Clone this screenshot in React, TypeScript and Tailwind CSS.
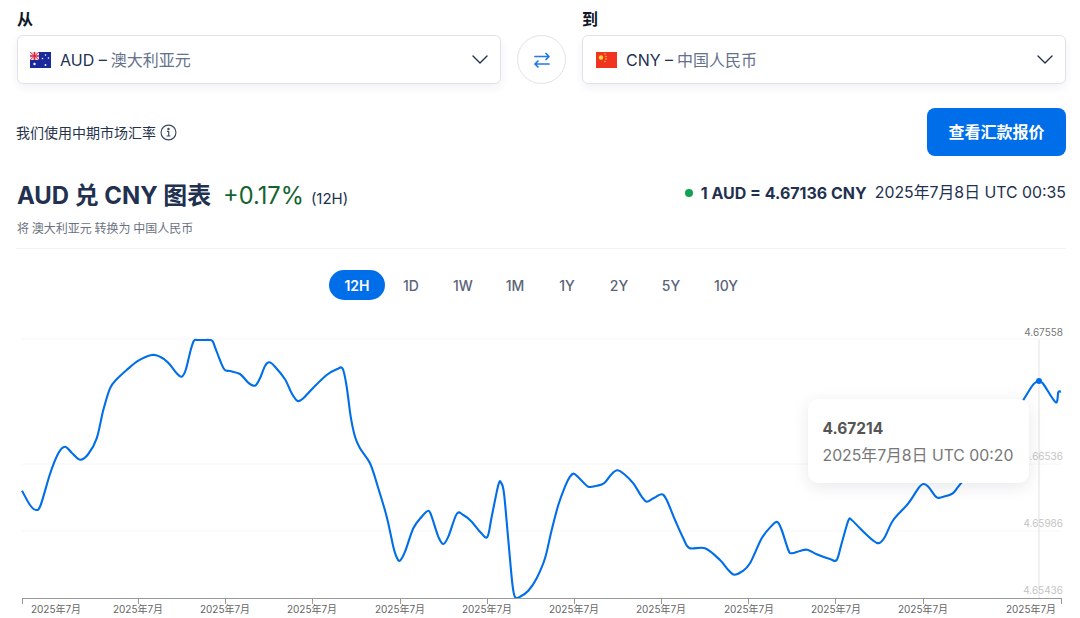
const font = { fontFamily: 'Inter, "Noto Sans CJK SC", sans-serif' }

// traced from the chart, [x, y] in page pixels minus the chart's top (320)
const raw: number[][] = [
  [66,512],[90,555],[108,570],[122,555],[150,462],[175,400],[195,380],[215,398],[240,419],[265,402],[290,355],[310,270],[330,205],[350,178],[380,150],[415,122],[455,105],[480,110],[505,128],[530,160],[545,170],[557,150],[572,90],[582,62],[592,60],[610,60],[628,60],[638,64],[650,95],[672,147],[690,153],[720,162],[745,188],[765,197],[780,175],[795,138],[808,127],[825,140],[855,178],[875,220],[893,243],[910,235],[940,203],[980,165],[1010,148],[1028,146],[1040,200],[1052,290],[1065,350],[1080,385],[1110,430],[1135,505],[1160,590],[1180,680],[1190,712],
  [1200,722],[1215,695],[1240,625],[1265,590],[1285,572],[1295,590],[1315,650],[1330,672],[1345,650],[1370,582],[1390,585],[1415,605],[1440,635],[1462,651],[1475,590],[1495,495],[1503,488],[1512,520],[1525,660],[1537,790],[1545,831],[1560,830],[1585,812],[1610,775],[1635,715],[1655,630],[1675,555],[1695,500],[1710,470],[1722,461],[1740,477],[1765,500],[1790,497],[1812,490],[1835,462],[1852,451],[1872,462],[1900,490],[1925,530],[1940,545],[1960,535],[1985,523],[2000,540],[2025,600],[2050,655],[2068,684],[2115,685],[2160,720],[2185,750],[2202,764],[2225,755],[2250,730],[2285,655],[2315,617],[2332,606],[2345,630],[2365,690],[2375,700],
  [2400,693],[2422,689],[2450,703],[2490,717],[2510,720],[2525,670],[2545,602],[2555,600],[2580,625],[2620,662],[2638,669],[2655,650],[2680,600],[2725,550],[2755,505],[2770,492],[2785,500],[2810,532],[2830,530],[2858,520],[2885,487],[2990,360],[3070,240],[3100,193],[3118,184],[3130,192],[3167,247],[3175,217],[3183,215],
]
const points = raw.map(([x, y]) => [x / 3, y / 3])

function smoothPath(pts: number[][]) {
  let d = `M${pts[0][0].toFixed(1)} ${pts[0][1].toFixed(1)}`
  for (let i = 0; i < pts.length - 1; i++) {
    const p0 = pts[Math.max(i - 1, 0)]
    const p1 = pts[i]
    const p2 = pts[i + 1]
    const p3 = pts[Math.min(i + 2, pts.length - 1)]
    const c1x = p1[0] + (p2[0] - p0[0]) / 6
    const c1y = p1[1] + (p2[1] - p0[1]) / 6
    const c2x = p2[0] - (p3[0] - p1[0]) / 6
    const c2y = p2[1] - (p3[1] - p1[1]) / 6
    d += `C${c1x.toFixed(1)} ${c1y.toFixed(1)} ${c2x.toFixed(1)} ${c2y.toFixed(1)} ${p2[0].toFixed(1)} ${p2[1].toFixed(1)}`
  }
  return d
}

const ranges = [
  { label: '12H', width: 'w-[56px] rounded-full bg-[#006ee9] font-semibold text-white' },
  { label: '1D', width: 'w-[52px] font-medium text-[#5b6579]' },
  { label: '1W', width: 'w-[52px] font-medium text-[#5b6579]' },
  { label: '1M', width: 'w-[52px] font-medium text-[#5b6579]' },
  { label: '1Y', width: 'w-[52px] font-medium text-[#5b6579]' },
  { label: '2Y', width: 'w-[52px] font-medium text-[#5b6579]' },
  { label: '5Y', width: 'w-[52px] font-medium text-[#5b6579]' },
  { label: '10Y', width: 'w-[58px] font-medium text-[#5b6579]' },
]
const ticks = [22, 138, 225, 312, 400, 487, 574, 661, 748, 835, 923, 1061]
const dateLabels = [56, 138, 225, 312, 400, 487, 574, 661, 749, 836, 923, 1031]
const grid = [19, 144, 211]
const yLabels = [
  { y: 16, text: '4.67558', fill: '#777777' },
  { y: 140, text: '4.66536', fill: '#c4c4c4' },
  { y: 207, text: '4.65986', fill: '#c4c4c4' },
  { y: 274, text: '4.65436', fill: '#c4c4c4' },
]

function AusFlag() {
  return (
    <svg width="21" height="16" viewBox="0 0 21 16" className="shrink-0">
      <rect width="21" height="16" fill="#1a2a9c" />
      <rect width="9" height="8" fill="#e8dce4" />
      <path d="M0 0l9 8M9 0L0 8" stroke="#d8455a" strokeWidth="1" />
      <path d="M4.5 0v8M0 4h9" stroke="#e5223c" strokeWidth="1.6" />
      <circle cx="4.5" cy="12" r="1.2" fill="#fff" />
      <circle cx="15.5" cy="3" r="0.8" fill="#fff" />
      <circle cx="12.5" cy="6.5" r="0.8" fill="#fff" />
      <circle cx="18.5" cy="6" r="0.8" fill="#fff" />
      <circle cx="15.5" cy="13" r="0.9" fill="#fff" />
    </svg>
  )
}

function CnFlag() {
  return (
    <svg width="21" height="16" viewBox="0 0 21 16" className="shrink-0">
      <rect width="21" height="16" fill="#f0341f" />
      <circle cx="5" cy="5.5" r="2.2" fill="#f8d83a" />
      <circle cx="9" cy="2" r="0.7" fill="#f8d83a" />
      <circle cx="10" cy="4.5" r="0.7" fill="#f8d83a" />
      <circle cx="10" cy="7" r="0.7" fill="#f8d83a" />
      <circle cx="9" cy="9.5" r="0.7" fill="#f8d83a" />
    </svg>
  )
}

function CurrencySelect({ flag, code, name, className }: { flag: React.ReactNode; code: string; name: string; className: string }) {
  return (
    <div className={`flex h-[49px] items-center rounded-md border border-[#dfe3e8] bg-white pr-[12px] shadow-[0_4px_10px_rgba(20,40,80,0.06)] ${className}`}>
      {flag}
      <span className="ml-[9px] text-[16px] text-[#22314f]">{code} – </span>
      <span className="ml-[4px] text-[16px] text-[#65718a]">{name}</span>
      <svg width="16" height="9" viewBox="0 0 16 9" fill="none" stroke="#22314f" strokeWidth="1.4" strokeLinecap="round" strokeLinejoin="round" className="ml-auto">
        <path d="M1 1l7 7 7-7" />
      </svg>
    </div>
  )
}

export default function App() {
  return (
    <div className="relative h-[618px] w-[1080px] overflow-hidden bg-white" style={font}>
      <div className="pr-[14px] pl-[16px]">
        <div className="flex items-end pt-[7px] pl-px">
          <div className="w-[484px]">
            <p className="mb-[4px] text-[16px] leading-[24px] font-bold text-[#111827]">从</p>
            <CurrencySelect flag={<AusFlag />} code="AUD" name="澳大利亚元" className="pl-[12px]" />
          </div>
          <button className="mx-[16px] flex size-[49px] shrink-0 items-center justify-center rounded-full border border-[#dfe3e8] bg-white text-[#1f7ae8]">
            <svg width="18" height="18" viewBox="0 0 18 18" fill="none" stroke="currentColor" strokeWidth="1.7" strokeLinecap="round" strokeLinejoin="round">
              <path d="M2 5.5h14M13 2.5l3 3-3 3M16 13H2M5 10l-3 3 3 3" />
            </svg>
          </button>
          <div className="w-[484px]">
            <p className="mb-[4px] text-[16px] leading-[24px] font-bold text-[#111827]">到</p>
            <CurrencySelect flag={<CnFlag />} code="CNY" name="中国人民币" className="pl-[13px]" />
          </div>
        </div>

        <div className="mt-[24px] flex items-center justify-between">
          <div className="flex items-center gap-[4px] text-[14px] text-[#27334a]">
            我们使用中期市场汇率
            <svg width="17" height="17" viewBox="0 0 16 16" fill="none" stroke="#3b4860" strokeWidth="1.1">
              <circle cx="8" cy="8" r="7" />
              <path d="M6.5 7h1.7v4.2M6.2 11.3h3.6" />
              <circle cx="8" cy="4.6" r="0.6" fill="#3b4860" />
            </svg>
          </div>
          <button className="h-[48px] w-[139px] rounded-lg bg-[#006ee9] text-[16px] font-bold text-white">查看汇款报价</button>
        </div>

        <div className="mt-[24px] flex items-center justify-between pl-px">
          <div className="flex items-baseline">
            <h1 className="text-[23.9px] leading-[32px] font-bold text-[#22314f]">AUD 兑 CNY 图表</h1>
            <span className="ml-[12px] text-[23.6px] leading-[32px] text-[#14632f]">+0.17%</span>
            <span className="ml-[7px] text-[15px] text-[#22314f]">(12H)</span>
          </div>
          <div className="mb-[6px] flex items-center text-[16px] text-[#22314f]">
            <span className="mr-[8px] size-[8px] rounded-full bg-[#12a150]" />
            <span className="font-bold">1 AUD = 4.67136 CNY</span>
            <span className="ml-[8px] text-[15.85px]">2025年7月8日 UTC 00:35</span>
          </div>
        </div>
        <p className="mt-[8px] pl-px text-[12px] leading-[18px] text-[#6b7280] [word-spacing:-0.6px]">将 澳大利亚元 转换为 中国人民币</p>
        <div className="mt-[10px] h-px bg-[#f0f3f7]" />

        <div className="mt-[21px] flex justify-center pl-[2px]">
          {ranges.map((r) => (
            <span key={r.label} className={`flex h-[30px] items-center justify-center text-[14px] ${r.width}`}>
              {r.label}
            </span>
          ))}
        </div>
      </div>

      <svg width="1080" height="298" viewBox="0 0 1080 298" className="absolute top-[320px] left-0">
        {grid.map((y) => (
          <line key={y} x1="22" x2="1061" y1={y} y2={y} stroke="#f6f6f6" />
        ))}
        <line x1="1039" x2="1039" y1="20" y2="278" stroke="#e2e2e2" />
        <path d={smoothPath(points)} fill="none" stroke="#006ee9" strokeWidth="2.1" strokeLinejoin="round" />
        <circle cx="1039" cy="61" r="3" fill="#006ee9" />
        <line x1="22" x2="1061" y1="278.5" y2="278.5" stroke="#999999" />
        {ticks.map((x) => (
          <line key={x} x1={x + 0.5} x2={x + 0.5} y1="278" y2="284" stroke="#999999" />
        ))}
        {dateLabels.map((x, i) => (
          <text key={i} x={x} y="293" textAnchor="middle" fontSize="10" fill="#666666">
            2025年7月
          </text>
        ))}
        {yLabels.map((l) => (
          <text key={l.text} x="1063" y={l.y} textAnchor="end" fontSize="10" fill={l.fill}>
            {l.text}
          </text>
        ))}
      </svg>

      <div className="absolute top-[399px] left-[808px] flex h-[84px] w-[221px] flex-col justify-center rounded-[10px] bg-white pt-[2px] pl-[14.5px] shadow-[0_4px_16px_rgba(30,40,60,0.10)]">
        <p className="text-[15.5px] leading-[27px] font-bold text-[#555555]">4.67214</p>
        <p className="text-[15.8px] leading-[27px] text-[#777777]">2025年7月8日 UTC 00:20</p>
      </div>
    </div>
  )
}
